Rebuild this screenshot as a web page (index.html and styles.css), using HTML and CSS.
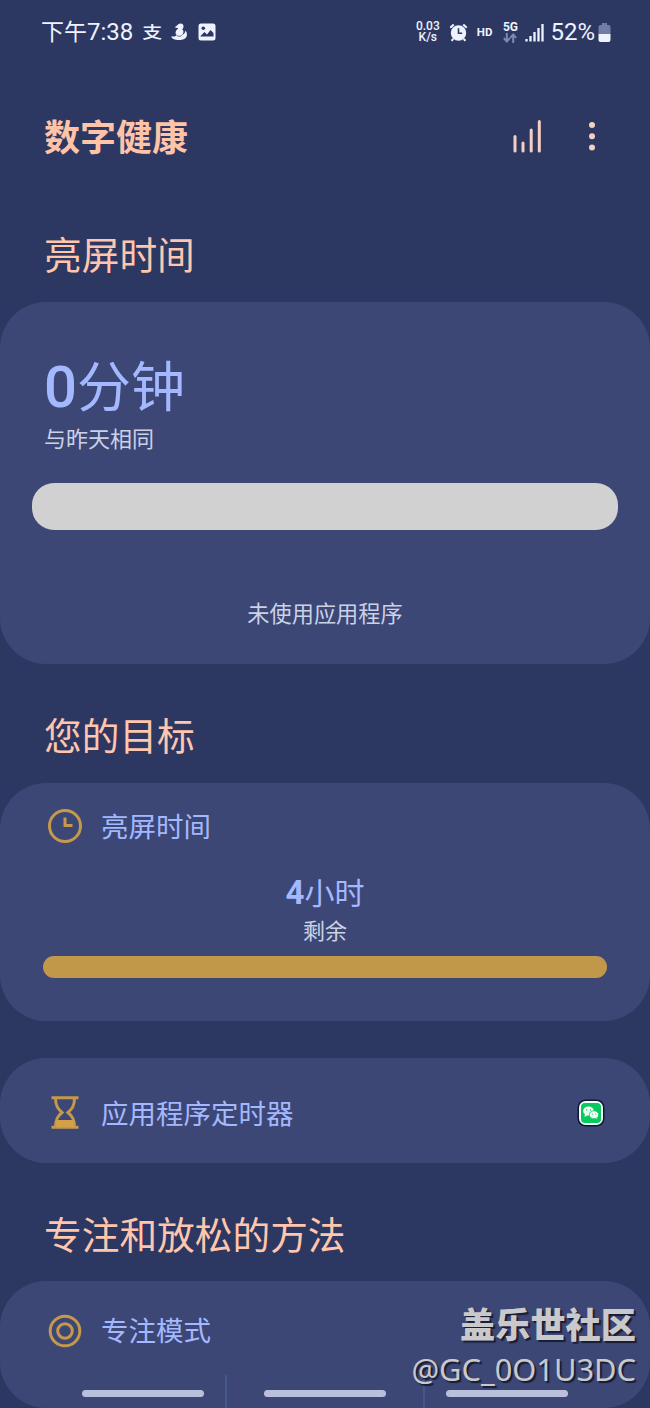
FILE: index.html
```html
<!DOCTYPE html>
<html lang="zh-CN">

<head>
	<meta charset="utf-8">
	<title>数字健康</title>
	<meta name="viewport" content="width=device-width, initial-scale=1" />
	<link rel="stylesheet" href="styles.css">
</head>

<body>

	<div class="status-bar">
		<div class="status-left">
			<span class="time"><span class="time-cn">下午</span>7:38</span>
			<span class="pay">支</span>
			<svg class="duck" width="17" height="18" viewBox="0 0 17 18">
				<circle cx="9.500" cy="3.400" r="3" />
				<path d="M7 1.800L3.600 4.300L8 5.500ZM7.500 5.500C12.500 5 13.500 8.500 11.500 11.500C14 11 14.200 8.500 14.500 7.500C17 10.500 17 16.500 9.500 17C4 17.300 0.800 16 0.300 13.200C2.500 13.800 4.500 13.500 5.500 12C3.500 10 5 6.800 7.500 5.500Z" />
				<path class="cut" d="M5.500 12.200C7.500 14 10 13.500 11.500 11.500" />
			</svg>
			<svg class="photo" width="18" height="18" viewBox="0 0 18 18">
				<rect x="0.500" y="0.500" width="17" height="17" rx="2.500" />
				<circle class="hole" cx="5.300" cy="5.300" r="1.800" />
				<path class="hole" d="M2.500 13L6.500 9L9 11.500L12.500 7L15.500 10V13.500H2.500Z" />
			</svg>
		</div>
		<div class="status-right">
			<div class="speed"><span>0.03</span><span>K/s</span></div>
			<svg class="alarm" width="19" height="19" viewBox="0 0 18 18">
				<path class="line" d="M1.200 4.500L4.500 1.400M16.800 4.500L13.500 1.400M4 15L2.500 17M14 15L15.500 17" />
				<circle cx="9" cy="9.500" r="7.300" />
				<path class="hand" d="M9 5V9.700H12.500" />
			</svg>
			<span class="hd">HD</span>
			<div class="net">
				<span>5G</span>
				<svg width="14" height="10" viewBox="0 0 14 10">
					<path d="M3.800 0V8M0.800 5.200L3.800 8.500L6.800 5.200M10.200 10V2M7.200 4.800L10.200 1.500L13.200 4.800" />
				</svg>
			</div>
			<svg class="signal" width="19" height="19" viewBox="0 0 19 19">
				<path d="M1.500 16V18.500M5.500 13V18.500M9.500 9V18.500M13.500 5V18.500M17.500 1V18.500" />
			</svg>
			<span class="percent">52%</span>
			<svg class="battery" width="13" height="19" viewBox="0 0 12 19">
				<path class="empty" d="M3.500 0H8.500V2H10Q12 2 12 4V11H0V4Q0 2 2 2H3.500Z" />
				<path class="full" d="M0 11H12V17Q12 19 10 19H2Q0 19 0 17Z" />
			</svg>
		</div>
	</div>

	<div class="app-bar">
		<h1>数字健康</h1>
		<svg class="chart" width="32" height="34" viewBox="0 0 32 34">
			<path d="M3 17.500V32M11 24V32M19.200 11V32M27.300 2.500V32" />
		</svg>
		<svg class="more" width="8" height="30" viewBox="0 0 8 30">
			<circle cx="4" cy="4" r="3" />
			<circle cx="4" cy="15.200" r="3" />
			<circle cx="4" cy="26.500" r="3" />
		</svg>
	</div>

	<h2 class="first">亮屏时间</h2>
	<div class="card usage">
		<div class="minutes"><b>0</b>分钟</div>
		<p class="compare">与昨天相同</p>
		<div class="usage-bar"></div>
		<p class="no-apps">未使用应用程序</p>
	</div>

	<h2>您的目标</h2>
	<div class="card goal">
		<div class="row">
			<svg class="icon" width="36" height="36" viewBox="0 0 36 36">
				<circle cx="18" cy="18" r="15.500" />
				<path d="M18 9.500V17.500H25.500" />
			</svg>
			<span>亮屏时间</span>
		</div>
		<div class="hours"><b>4</b>小时</div>
		<p class="left">剩余</p>
		<div class="goal-bar"></div>
	</div>

	<div class="card timer">
		<div class="row">
			<svg class="icon" width="36" height="36" viewBox="0 0 36 36">
				<path d="M4.500 2.800H31.500M4.500 32.200H31.500" />
				<path d="M8.500 3C8.500 11 11 14 15 17.500C11 21 8.500 24 8.500 32M27.500 3C27.500 11 25 14 21 17.500C25 21 27.500 24 27.500 32" />
				<path class="sand" d="M9 32L9.500 25H26.500L27 32Z" />
			</svg>
			<span>应用程序定时器</span>
			<svg class="wechat" width="28" height="28" viewBox="0 0 28 28">
				<rect class="edge" x="0.500" y="0.500" width="27" height="27" rx="8" />
				<rect class="white" x="2" y="2" width="24" height="24" rx="6.500" />
				<rect class="green" x="4" y="4" width="20" height="20" rx="4" />
				<ellipse class="white" cx="11.500" cy="12" rx="5.300" ry="4.500" />
				<path class="white" d="M8 15L7.500 18L11 16ZM19 18L20.500 20.200L17 19Z" />
				<ellipse class="bubble" cx="17" cy="15.800" rx="4.700" ry="4" />
				<circle class="green" cx="9.800" cy="11" r="0.700" />
				<circle class="green" cx="13.400" cy="11" r="0.700" />
				<circle class="green" cx="15.500" cy="15" r="0.600" />
				<circle class="green" cx="18.600" cy="15" r="0.600" />
			</svg>
		</div>
	</div>

	<h2 class="last">专注和放松的方法</h2>
	<div class="card focus">
		<div class="row">
			<svg class="icon" width="36" height="36" viewBox="0 0 36 36">
				<circle cx="18" cy="18" r="14.800" />
				<circle cx="18" cy="18" r="7.300" />
			</svg>
			<span>专注模式</span>
		</div>
		<div class="dividers"></div>
	</div>

	<!-- gesture hints, on top of the page -->
	<div class="nav-hints"><i></i><i></i><i></i></div>
	<div class="watermark">
		<div class="community">盖乐世社区</div>
		<div class="user">@GC_0O1U3DC</div>
	</div>

</body>

</html>
```
FILE: styles.css
```css
* {
	box-sizing: border-box;
}

body {
	position: relative;
	height: 1408px;
	margin: 0;
	overflow: hidden;
	background-color: #2d3862;
	color: #cbd2e6;
	font-family: Roboto, "Noto Sans CJK SC", sans-serif;
}

svg {
	display: block;
	flex: none;
}

h1, h2, p {
	margin: 0;
}

/* Status bar */
.status-bar {
	display: flex;
	justify-content: space-between;
	height: 62px;
	padding: 2px 39px 0 41px;
	color: #eef3ff;
	fill: #eef3ff;
}

.status-left,
.status-right {
	display: flex;
	align-items: center;
}

.time {
	font-size: 24px;
	line-height: 60px;
}

.time-cn {
	font-size: 23px;
}

.pay {
	margin-left: 9px;
	font-size: 20px;
	font-weight: 500;
	line-height: 20px;
	transform: scaleY(0.8);
}

.duck {
	margin-left: 9px;
}

.duck .cut {
	fill: none;
	stroke: #2d3862;
	stroke-width: 0.7;
}

.photo {
	margin-left: 10px;
}

.photo .hole {
	fill: #2d3862;
}

.speed {
	display: flex;
	flex-direction: column;
	width: 26px;
	font-size: 12px;
	font-weight: 500;
	line-height: 11px;
	text-align: center;
}

.alarm {
	margin-left: 8px;
}

.alarm .line {
	fill: none;
	stroke: #eef3ff;
	stroke-width: 2;
}

.alarm .hand {
	fill: none;
	stroke: #2d3862;
	stroke-width: 1.5;
}

.hd {
	margin-left: 9px;
	font-size: 11.5px;
	font-weight: bold;
}

.net {
	display: flex;
	flex-direction: column;
	align-items: center;
	width: 18px;
	margin-left: 9px;
	font-size: 12px;
	font-weight: bold;
	line-height: 12px;
}

.net svg {
	fill: none;
	stroke: #7f88ad;
	stroke-width: 2;
}

.signal {
	margin-left: 6px;
	stroke: #eef3ff;
	stroke-width: 2.3;
}

.percent {
	margin-left: 6px;
	font-size: 24px;
}

.battery {
	margin-left: 3px;
}

.battery .empty {
	fill: #747ca3;
}

/* Headings */
.app-bar {
	display: flex;
	align-items: center;
	height: 148px;
	padding: 0 54px 0 44px;
}

h1 {
	flex: 1;
	margin-top: -3px;
	color: #ffc4a8;
	font-size: 36px;
	font-weight: bold;
}

.chart {
	margin-right: 44px;
	fill: none;
	stroke: #f6cfc3;
	stroke-width: 3;
	stroke-linecap: round;
}

.more {
	fill: #f6cfc3;
}

h2 {
	height: 119px;
	padding-left: 44px;
	color: #ffc6ad;
	font-size: 37.7px;
	font-weight: normal;
	line-height: 147px;
}

h2.first {
	height: 92px;
	line-height: 92px;
}

h2.last {
	height: 118px;
}

/* Cards */
.card {
	border-radius: 46px;
	background-color: #3c4776;
}

.usage {
	height: 362px;
	padding: 49px 32px 0;
}

.minutes {
	height: 72px;
	padding-left: 12px;
	color: #a4b8ff;
	font-size: 54px;
	line-height: 72px;
	white-space: nowrap;
}

.minutes b {
	font-size: 58px;
	font-weight: 500;
}

.compare {
	padding-left: 12px;
	font-size: 22px;
	line-height: 34px;
}

.usage-bar {
	height: 47px;
	margin-top: 26px;
	border-radius: 22px;
	background-color: #d1d1d1;
}

.no-apps {
	margin-top: 67px;
	font-size: 22.2px;
	line-height: 34px;
	text-align: center;
}

.row {
	display: flex;
	align-items: center;
	height: 86px;
	padding: 0 45px 0 47px;
	color: #a4b8ff;
	font-size: 27.5px;
}

.row span {
	margin-top: -2px;
}

.icon {
	margin-right: 18px;
	fill: none;
	stroke: #c4994c;
	stroke-width: 3;
}

.icon .sand {
	fill: #d3a047;
	stroke: none;
}

.goal {
	height: 238px;
}

.hours {
	color: #a4b8ff;
	font-size: 30px;
	line-height: 48px;
	text-align: center;
}

.hours b {
	font-size: 33px;
}

.left {
	font-size: 22px;
	line-height: 28px;
	text-align: center;
}

.goal-bar {
	height: 22px;
	margin: 10px 43px 0;
	border-radius: 11px;
	background-color: #c1984a;
}

.timer {
	height: 105px;
	margin-top: 37px;
}

.timer .row {
	height: 109px;
}

.wechat {
	margin-left: auto;
}

.wechat .edge {
	fill: #101735;
}

.wechat .white {
	fill: #f2fff6;
}

.wechat .green {
	fill: #08c95f;
}

.wechat .bubble {
	fill: #f2fff6;
	stroke: #08c95f;
	stroke-width: 0.8;
}

.focus {
	height: 127px;
}

.focus .row {
	height: 100px;
}

.focus .row span {
	margin-top: -4px;
}

.dividers {
	width: 200px;
	height: 33px;
	margin: -6px 0 0 225px;
	border: solid #465789;
	border-width: 0 2px;
}

/* Overlays */
.nav-hints {
	position: absolute;
	left: 82px;
	bottom: 11px;
	display: flex;
	gap: 60px;
}

.nav-hints i {
	width: 122px;
	height: 7px;
	border-radius: 4px;
	background-color: #bac0db;
}

.watermark {
	position: absolute;
	right: 14px;
	bottom: 19px;
	color: #c9c9cc;
	text-align: right;
	text-shadow: 2px 2px 1px #171d35;
}

.community {
	font-size: 35.2px;
	font-weight: 900;
	line-height: 46px;
}

.user {
	font-family: "Noto Sans", sans-serif;
	font-size: 30.8px;
	line-height: 40px;
}
```
